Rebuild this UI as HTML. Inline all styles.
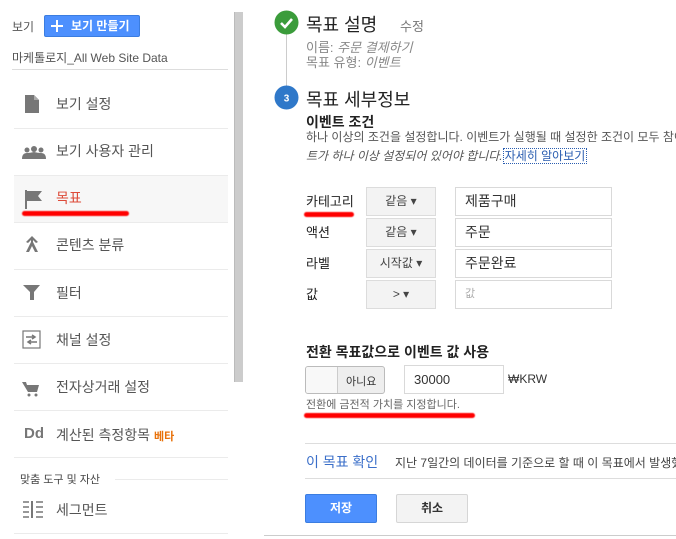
<!DOCTYPE html>
<html><head><meta charset="utf-8"><style>
*{box-sizing:border-box;margin:0;padding:0}
body{width:676px;height:539px;overflow:hidden;background:#fff;font-family:"Liberation Sans","Noto Sans CJK KR",sans-serif;color:#333;position:relative}
.a{position:absolute;white-space:nowrap}
.sep{position:absolute;left:14px;width:214px;height:1px;background:#ebebeb}
.it{position:absolute;left:56px;font-size:14px;color:#555}
.ic{position:absolute;left:22px}
.dd{position:absolute;left:366px;width:70px;height:29px;border:1px solid #dcdcdc;background:#f3f3f3;font-size:12px;color:#444;text-align:center;line-height:27px}
.inp{position:absolute;left:455px;width:157px;height:29px;border:1px solid #d9d9d9;font-size:14px;line-height:27px;padding-left:9px;color:#333}
.lb{position:absolute;left:306px;font-size:13px;color:#222}
.red{position:absolute;height:5px;border-radius:3px;background:#f00;filter:blur(.6px)}
</style></head><body>
<div class="a" style="left:12px;top:18px;font-size:12px;color:#555">보기</div>
<div class="a" style="left:44px;top:15px;width:96px;height:22px;background:#4d90fe;border:1px solid #3b7de0;border-radius:2px;color:#fff;font-size:12px;font-weight:bold;line-height:20px;padding-left:26px">보기 만들기</div>
<div class="a" style="left:51px;top:18px;width:12px;height:2px;background:#fff;margin-top:7px"></div>
<div class="a" style="left:56px;top:20px;width:2px;height:12px;background:#fff"></div>
<div class="a" style="left:12px;top:49px;font-size:12px;color:#555">마케톨로지_All Web Site Data</div>
<div class="a" style="left:12px;top:69px;width:216px;height:1px;background:#ddd"></div>

<div class="a" style="left:14px;top:175px;width:214px;height:47px;background:#f7f7f7"></div>
<div class="sep" style="top:128px"></div><div class="sep" style="top:175px"></div><div class="sep" style="top:222px"></div><div class="sep" style="top:269px"></div><div class="sep" style="top:316px"></div><div class="sep" style="top:363px"></div><div class="sep" style="top:410px"></div><div class="sep" style="top:457px"></div><div class="sep" style="top:533px"></div>

<svg class="ic" style="top:93px" width="20" height="22"><path d="M3 2h9l5 5v13H3z" fill="#777"/><path d="M12 2v5h5" fill="#aaa"/></svg>
<div class="it" style="top:94px">보기 설정</div>
<svg class="ic" style="top:145px" width="24" height="16"><circle cx="5" cy="5" r="2.5" fill="#777"/><circle cx="12" cy="4" r="3" fill="#777"/><circle cx="19" cy="5" r="2.5" fill="#777"/><path d="M0 14q0-6 5-6 3 0 7-1 4 1 7 1 5 0 5 6z" fill="#777"/></svg>
<div class="it" style="top:141px">보기 사용자 관리</div>
<svg class="ic" style="top:188px" width="22" height="22"><path d="M3 2h2v19H3z" fill="#777"/><path d="M5 3h15l-4 5 4 5H5z" fill="#777"/></svg>
<div class="it" style="top:188px;color:#dd4b39">목표</div>
<div class="red" style="left:22px;top:211px;width:107px"></div>
<svg class="ic" style="top:234px" width="20" height="20"><path d="M10 2l6 6-2 1-3-3v2l5 10h-3l-3-6-3 6H4l5-10V6L6 9 4 8z" fill="#777"/></svg>
<div class="it" style="top:235px">콘텐츠 분류</div>
<svg class="ic" style="top:283px" width="20" height="20"><path d="M1 2h17l-6 7v8H8V9z" fill="#777"/></svg>
<div class="it" style="top:283px">필터</div>
<svg class="ic" style="top:330px" width="20" height="20"><rect x="1" y="1" width="17" height="17" fill="none" stroke="#777" stroke-width="1.2"/><path d="M4 7h8M10 5l3 2-3 2M15 12H7M9 10l-3 2 3 2" stroke="#777" fill="none" stroke-width="1.5"/></svg>
<div class="it" style="top:330px">채널 설정</div>
<svg class="ic" style="top:378px" width="20" height="20"><path d="M0 4h4l1 3h12l-2 7H6z" fill="#777"/><circle cx="7" cy="17" r="1.5" fill="#777"/><circle cx="14" cy="17" r="1.5" fill="#777"/></svg>
<div class="it" style="top:377px">전자상거래 설정</div>
<div class="a" style="left:24px;top:425px;font-size:15px;font-weight:bold;color:#777">Dd</div>
<div class="it" style="top:425px">계산된 측정항목 <span style="color:#e8710a;font-size:11px;font-weight:bold">베타</span></div>
<div class="a" style="left:20px;top:471px;font-size:11px;color:#444">맞춤 도구 및 자산</div>
<div class="a" style="left:115px;top:479px;width:113px;height:1px;background:#ebebeb"></div>
<svg class="ic" style="top:500px" width="22" height="18"><path d="M1 2h6M1 7h6M1 12h6M1 17h6M14 2h7M14 7h7M14 12h7M14 17h7" stroke="#777" stroke-width="1.5"/><path d="M10 1v17" stroke="#777" stroke-width="2"/></svg>
<div class="it" style="top:500px">세그먼트</div>

<div class="a" style="left:234px;top:12px;width:9px;height:370px;background:#ccc;border-left:1px solid #bbb"></div>

<div class="a" style="left:286px;top:30px;width:1px;height:56px;background:#ccc"></div>
<svg class="a" style="left:274px;top:10px" width="25" height="25"><circle cx="12.5" cy="12.5" r="12" fill="#3b9c3b"/><path d="M7 13l4 4 7-8" stroke="#fff" stroke-width="2.6" fill="none"/></svg>
<div class="a" style="left:306px;top:11px;font-size:18px;color:#222">목표 설명</div>
<div class="a" style="left:400px;top:16px;font-size:13px;color:#777">수정</div>
<div class="a" style="left:306px;top:40px;font-size:13px;color:#888;line-height:15px">이름: <i>주문 결제하기</i><br>목표 유형: <i>이벤트</i></div>
<svg class="a" style="left:274px;top:85px" width="25" height="25"><circle cx="12.5" cy="12.5" r="12" fill="#2f78c9"/><text x="12.5" y="16.5" font-size="10" fill="#fff" text-anchor="middle" font-family="Liberation Sans" font-weight="bold">3</text></svg>
<div class="a" style="left:306px;top:86px;font-size:18px;color:#222">목표 세부정보</div>
<div class="a" style="left:306px;top:112px;font-size:14px;font-weight:bold;color:#222">이벤트 조건</div>
<div class="a" style="left:306px;top:128px;font-size:12px;color:#555">하나 이상의 조건을 설정합니다. 이벤트가 실행될 때 설정한 조건이 모두 참이</div>
<div class="a" style="left:306px;top:147px;font-size:12px;color:#555"><i>트가 하나 이상 설정되어 있어야 합니다.</i><span style="color:#2a5db0;border:1px dotted #2a5db0;padding:0 1px">자세히 알아보기</span></div>

<div class="lb" style="top:191px">카테고리</div>
<div class="red" style="left:304px;top:212px;width:50px"></div>
<div class="lb" style="top:222px">액션</div>
<div class="lb" style="top:253px">라벨</div>
<div class="lb" style="top:284px">값</div>
<div class="dd" style="top:187px">같음 ▾</div>
<div class="dd" style="top:218px">같음 ▾</div>
<div class="dd" style="top:249px">시작값 ▾</div>
<div class="dd" style="top:280px">&gt; ▾</div>
<div class="inp" style="top:187px">제품구매</div>
<div class="inp" style="top:218px">주문</div>
<div class="inp" style="top:249px">주문완료</div>
<div class="inp" style="top:280px;color:#aaa;font-size:11px">값</div>

<div class="a" style="left:306px;top:342px;font-size:14px;font-weight:bold;color:#222">전환 목표값으로 이벤트 값 사용</div>
<div class="a" style="left:305px;top:366px;width:80px;height:28px;border:1px solid #bbb;border-radius:3px;background:#eee;overflow:hidden">
<div style="position:absolute;left:0;top:0;width:32px;height:26px;background:#f8f8f8;border-right:1px solid #ccc"></div>
<div style="position:absolute;left:40px;top:6px;font-size:11px;color:#333">아니요</div></div>
<div class="a" style="left:404px;top:365px;width:100px;height:29px;border:1px solid #d9d9d9;font-size:13px;line-height:27px;padding-left:9px;color:#333">30000</div>
<div class="a" style="left:508px;top:372px;font-size:12px;color:#333">₩KRW</div>
<div class="a" style="left:306px;top:396px;font-size:11px;color:#666">전환에 금전적 가치를 지정합니다.</div>
<div class="red" style="left:304px;top:413px;width:171px"></div>

<div class="a" style="left:305px;top:443px;width:371px;height:1px;background:#ddd"></div>
<div class="a" style="left:306px;top:452px;font-size:14px;color:#3b6fc9">이 목표 확인</div>
<div class="a" style="left:395px;top:454px;font-size:12px;color:#444">지난 7일간의 데이터를 기준으로 할 때 이 목표에서 발생했</div>
<div class="a" style="left:305px;top:478px;width:371px;height:1px;background:#ddd"></div>
<div class="a" style="left:305px;top:494px;width:72px;height:29px;background:#4d90fe;border:1px solid #3b7de0;border-radius:2px;color:#fff;font-size:12px;font-weight:bold;text-align:center;line-height:27px">저장</div>
<div class="a" style="left:396px;top:494px;width:72px;height:29px;background:#f3f3f3;border:1px solid #d6d6d6;border-radius:2px;color:#333;font-size:12px;font-weight:bold;text-align:center;line-height:27px">취소</div>
<div class="a" style="left:264px;top:535px;width:412px;height:1px;background:#ccc"></div>
</body></html>
